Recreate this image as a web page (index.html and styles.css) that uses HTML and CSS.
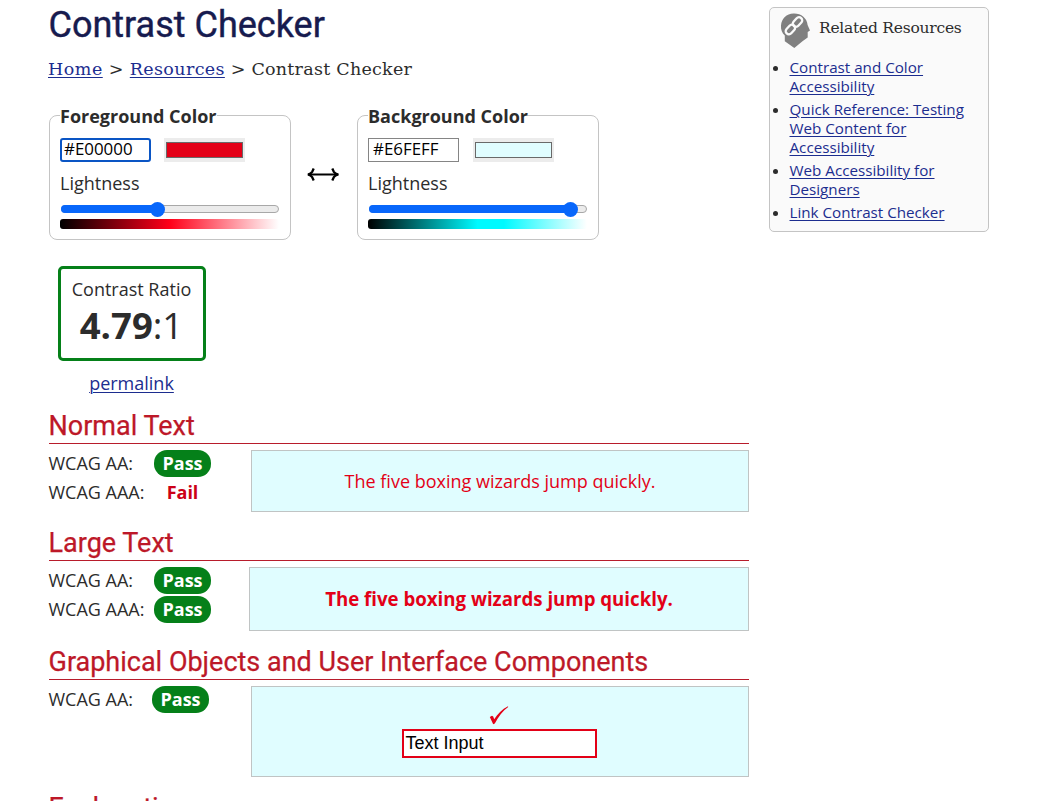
FILE: index.html
```
<!DOCTYPE html>
<html lang="en">
<head>
<meta charset="utf-8">
<title>Contrast Checker</title>
<link rel="stylesheet" href="styles.css">
</head>
<body>
<div class="page">
  <main class="main">
    <h1 class="title">Contrast Checker</h1>
    <nav class="crumbs"><a href="#">Home</a><span>&gt;</span><a href="#">Resources</a><span>&gt;</span><span class="current">Contrast Checker</span></nav>

    <div class="pickers">
      <fieldset class="picker">
        <legend>Foreground Color</legend>
        <div class="inputs"><div class="hex focused">#E00000</div><div class="swatch"><div class="chip red"></div></div></div>
        <div class="label">Lightness</div>
        <div class="track"><div class="fill" style="width:96px"><span class="thumb"></span></div></div>
        <div class="ramp ramp-red"></div>
      </fieldset>
      <svg class="swap" width="36" height="16" viewBox="0 0 36 16" fill="none" stroke="#000"><path d="M2.500 7.500h30" stroke-width="2"/><path d="M7.700 1.500 6.200 4.800Q5 6.500 2 7.500Q5 8.500 6.200 10.200L7.700 13.500M26.300 1.500 27.800 4.800Q29 6.500 32 7.500Q29 8.500 27.800 10.200L26.300 13.500" stroke-width="2.300" stroke-linejoin="bevel"/></svg>
      <fieldset class="picker">
        <legend>Background Color</legend>
        <div class="inputs second"><div class="hex">#E6FEFF</div><div class="swatch"><div class="chip aqua"></div></div></div>
        <div class="label">Lightness</div>
        <div class="track"><div class="fill" style="width:201px"><span class="thumb"></span></div></div>
        <div class="ramp ramp-aqua"></div>
      </fieldset>
    </div>

    <div class="ratio-col">
      <div class="ratio"><div class="ratio-label">Contrast Ratio</div><div class="ratio-value"><b>4.79</b>:1</div></div>
      <a href="#" class="permalink">permalink</a>
    </div>

    <section class="result normal">
      <h2>Normal Text</h2>
      <div class="body">
        <div class="levels">
          <div class="level"><span class="name">WCAG AA:</span><span class="badge">Pass</span></div>
          <div class="level"><span class="name">WCAG AAA:</span><span class="badge fail">Fail</span></div>
        </div>
        <div class="sample">The five boxing wizards jump quickly.</div>
      </div>
    </section>
    <section class="result large">
      <h2>Large Text</h2>
      <div class="body">
        <div class="levels">
          <div class="level"><span class="name">WCAG AA:</span><span class="badge">Pass</span></div>
          <div class="level"><span class="name">WCAG AAA:</span><span class="badge">Pass</span></div>
        </div>
        <div class="sample">The five boxing wizards jump quickly.</div>
      </div>
    </section>
    <section class="result graphic">
      <h2>Graphical Objects and User Interface Components</h2>
      <div class="body">
        <div class="levels">
          <div class="level"><span class="name">WCAG AA:</span><span class="badge">Pass</span></div>
        </div>
        <div class="sample">
          <svg class="check" width="20" height="20" viewBox="0 0 20 20"><path d="M.8 11 3 9.700 4.200 10.400 5.200 13.200C8.500 8 13 3.300 19 .2L19.200.9C13.600 5 9.300 10.600 5.800 17.600L4.200 18.300Z" fill="#e30017"/></svg>
          <div class="textbox">Text Input</div>
        </div>
      </div>
    </section>
    <section class="result">
      <h2>Explanation</h2>
    </section>
  </main>

  <aside class="related">
    <div class="related-head">
      <svg width="32" height="36" viewBox="0 0 32 36"><path d="M13.500.5C21 .2 27 5 27.600 12L30 17.500 27.700 19V24.500L22.800 28 14.300 35 4.800 28.200V22.500C2 20 .7 16.500 1 12.500 1.500 5.500 6.500.8 13.500.5Z" fill="#808080"/><g fill="none" stroke="#fafafa" stroke-width="2.300"><rect x="-5.400" y="-3.200" width="10.800" height="6.400" rx="3.200" transform="translate(17.500 9) rotate(-47)"/><rect x="-5.400" y="-3.200" width="10.800" height="6.400" rx="3.200" transform="translate(10.400 16.500) rotate(-47)"/></g></svg>
      <h3>Related Resources</h3>
    </div>
    <ul>
      <li><a href="#">Contrast and Color<br>Accessibility</a></li>
      <li><a href="#">Quick Reference: Testing<br>Web Content for<br>Accessibility</a></li>
      <li><a href="#">Web Accessibility for<br>Designers</a></li>
      <li><a href="#">Link Contrast Checker</a></li>
    </ul>
  </aside>
</div>
</body>
</html>
```
FILE: styles.css
```
* { box-sizing: border-box; }
html { overflow: hidden; }
body {
  margin: 0;
  height: 801px;
  overflow: hidden;
  background: #fff;
  color: #2c2c2c;
  font: 18px/24px "Open Sans", sans-serif;
  white-space: nowrap;
}
a { color: #1c2d8f; text-decoration: underline; text-underline-offset: 2px; text-decoration-thickness: 1px; }
.page { width: 940px; margin-left: 49px; display: flex; justify-content: space-between; align-items: flex-start; }
.main { width: 700px; }

.title { margin: 0 0 0 -.5px; padding-top: 4px; height: 56px; font: 400 36px/42px Roboto, sans-serif; color: #171b4f; -webkit-text-stroke: .4px #171b4f; }
.crumbs { height: 26px; display: flex; gap: 6px; font: 17.5px/26px "DejaVu Serif", serif; letter-spacing: .36px; }
.crumbs a:first-child { margin-left: -1px; letter-spacing: .5px; }
.crumbs .current { margin-left: -.5px; letter-spacing: .25px; }

.pickers { display: flex; margin-top: 24px; height: 134px; }
.picker {
  width: 242px; height: 134px; margin: 0; padding: 0 10px; min-width: 0;
  border: 1px solid #c4c4c4; border-radius: 8px;
}
.picker legend { padding: 0; height: 19px; line-height: 20px; font-weight: 700; width: 157px; }
.inputs { display: flex; gap: 13px; margin-top: 13px; }
.inputs.second { gap: 14px; }
.hex { width: 91px; height: 24px; padding: 0 0 0 4px; border: 1px solid #858585; color: #000; font-size: 16.9px; line-height: 20px; }
.hex.focused { padding-left: 2px; border: 2px solid #0a55c4; border-radius: 3px; line-height: 18px; }
.swatch { width: 81px; height: 24px; padding: 4px 2px; background: #ececec; }
.chip { height: 16px; width: 77px; border: 1px solid #696969; }
.red { background: #e30017; }
.aqua { background: #e0fdff; }
.label { margin-top: 9px; height: 24px; }
.track { width: 218px; height: 8px; margin: 10px 0 0 1px; border: 1px solid #a8a8a8; border-radius: 4px; background: #ebebeb; }
.fill { position: relative; height: 8px; margin: -1px 0 0 -1px; border-radius: 4px; background: #0867fb; }
.thumb { position: absolute; right: -7.5px; top: -3.5px; width: 15px; height: 15px; border-radius: 50%; background: #0867fb; }
.ramp { width: 219px; height: 10px; margin-top: 6px; border-radius: 3px; }
.ramp-red { background: linear-gradient(to right, #000, #ff0019 50%, #fff); }
.ramp-aqua { background: linear-gradient(to right, #000, #00faff 50%, #00faff 62%, #fff); }
.swap { margin: 61px 15px 0; }

.ratio-col { width: 148px; margin: 26px 0 0 9px; text-align: center; }
.ratio { height: 95px; padding-top: 8px; border: 3px solid #058019; border-radius: 5px; }
.ratio-label { margin-left: -1px; }
.ratio-value { margin-left: -1px; font-size: 36.5px; line-height: 49px; }
.permalink { display: block; margin: 10px 0 0 -1px; line-height: 24px; }

.result h2 { margin: 0; height: 34px; border-bottom: 1px solid #b81c2b; color: #bd1828; font: 400 27px/33px Roboto, sans-serif; -webkit-text-stroke: .25px #bd1828; text-indent: -.5px; }
.normal { margin-top: 15px; height: 117px; }
.large { height: 119px; }
.graphic { height: 146px; }
.body { display: flex; justify-content: space-between; padding-top: 6px; }
.levels { display: grid; row-gap: 2px; align-content: start; }
.level { display: flex; height: 27px; line-height: 27px; }
.name { width: 105px; text-indent: -.5px; }
.graphic .name { width: 103px; }
.badge { width: 57px; border-radius: 13px; background: #058019; color: #fff; font-weight: 700; text-align: center; }
.badge.fail { background: none; color: #cc0017; }
.sample { width: 498px; height: 62px; border: 1px solid #c0c4c4; background: #e0fdff; color: #e30017; text-align: center; line-height: 60px; }
.large .sample { width: 500px; height: 64px; font-size: 18.67px; font-weight: 700; line-height: 62px; }
.graphic .sample { height: 91px; display: flex; flex-direction: column; align-items: center; padding: 19px 2px 0 0; }
.check { margin-bottom: 3px; }
.textbox { flex: none; width: 195px; height: 29px; padding-left: 2px; border: 2px solid #e30017; background: #fff; color: #000; font: 18px/25px "Liberation Sans", sans-serif; text-align: left; }

.related { width: 220px; height: 225px; margin-top: 7px; border: 1px solid #c4c4c4; border-radius: 5px; background: #fafafa; font-size: 15.2px; line-height: 19px; }
.related-head { display: flex; gap: 7px; height: 50px; padding: 5px 0 0 10px; }
.related h3 { margin: 2px 0 0; font: 400 15.5px/26px "DejaVu Serif", serif; letter-spacing: -.24px; }
.related ul { margin: 0; padding-left: 19.5px; }
.related li { margin-bottom: 4px; }
```
